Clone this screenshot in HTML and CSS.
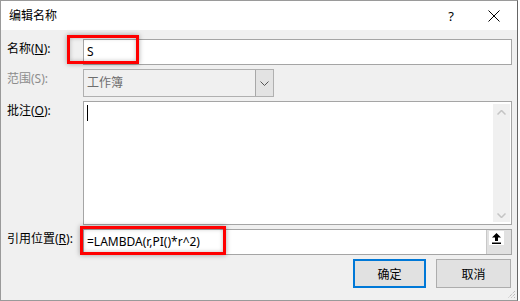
FILE: index.html
```html
<!DOCTYPE html>
<html lang="zh-CN">
<head>
    <meta charset="UTF-8">
    <title>编辑名称</title>
    <link rel="stylesheet" href="styles.css">
</head>
<body>
    <div class="dialog">
        <div class="titlebar">
            <span class="title">编辑名称</span>
            <span class="help">?</span>
            <svg class="close" width="12" height="12" viewBox="0 0 12 12">
                <path d="M0.5 0.5 L11.5 11.5 M11.5 0.5 L0.5 11.5" stroke="#000" stroke-width="1" fill="none"/>
            </svg>
        </div>

        <div class="content">
            <div class="row">
                <label class="lbl">名称(<u>N</u>):</label>
                <div class="field">
                    <span class="val">S</span>
                    <span class="mark mark-name"></span>
                </div>
            </div>

            <div class="row row-scope">
                <label class="lbl lbl-off">范围(S):</label>
                <div class="select">
                    <span class="val">工作簿</span>
                    <span class="drop">
                        <svg width="9" height="5" viewBox="0 0 9 5"><path d="M0.5 0.5 L4.5 4.5 L8.5 0.5" stroke="#555" fill="none"/></svg>
                    </span>
                </div>
            </div>

            <div class="row row-note">
                <label class="lbl">批注(<u>O</u>):</label>
                <div class="memo">
                    <div class="memo-text"><span class="caret"></span></div>
                    <div class="vscroll">
                        <svg width="9" height="5" viewBox="0 0 9 5"><path d="M0.5 4.5 L4.5 0.5 L8.5 4.5" stroke="#c4c4c4" stroke-width="1.5" fill="none"/></svg>
                        <svg width="9" height="5" viewBox="0 0 9 5"><path d="M0.5 0.5 L4.5 4.5 L8.5 0.5" stroke="#c4c4c4" stroke-width="1.5" fill="none"/></svg>
                    </div>
                </div>
            </div>

            <div class="row row-ref">
                <label class="lbl">引用位置(<u>R</u>):</label>
                <div class="field">
                    <span class="val grow">=LAMBDA(r,PI()*r^2)</span>
                    <span class="pick">
                        <span class="pick-face">
                            <svg width="9" height="11" viewBox="0 0 9 11">
                                <path d="M4.5 0 L9 4.5 H6 V8 H3 V4.5 H0 Z" fill="#000"/>
                                <rect x="0" y="9.5" width="9" height="1.5" fill="#000"/>
                            </svg>
                        </span>
                    </span>
                    <span class="mark mark-ref"></span>
                </div>
            </div>

            <div class="actions">
                <button class="btn btn-ok">确定</button>
                <button class="btn btn-cancel">取消</button>
            </div>
        </div>

        <svg class="grip" width="10" height="10" viewBox="0 0 10 10">
            <path d="M9 2 L2 9 M9 5 L5 9 M9 8 L8 9" stroke="#a8a8a8" stroke-width="1" stroke-dasharray="1 1" fill="none"/>
        </svg>
    </div>
</body>
</html>
```

FILE: styles.css
```css
body {
    margin: 0;
    background: #fff;
    font-family: "Noto Sans", "Noto Sans CJK SC", sans-serif;
    font-size: 12px;
    color: #000;
}
.dialog {
    position: relative;
    width: 518px;
    height: 301px;
    box-sizing: border-box;
    border: 1px solid #9a9a9a;
    border-right-color: #666;
    background: #f0f0f0;
    display: flex;
    flex-direction: column;
}
.titlebar {
    height: 29px;
    background: #fff;
    display: flex;
    align-items: center;
    padding-left: 8px;
    line-height: 16px;
}
.title {
    flex: 1;
}
.help {
    width: 8px;
    text-align: center;
    margin-right: 33px;
    font-size: 13px;
}
.close {
    margin-right: 17px;
}
.content {
    padding: 9px 5px 0 6px;
    display: flex;
    flex-direction: column;
}
.row {
    display: flex;
    align-items: flex-start;
}
.row-scope,
.row-note,
.row-ref {
    margin-top: 4px;
}
.lbl {
    width: 76px;
    padding-top: 2px;
    line-height: 16px;
    white-space: nowrap;
}
.lbl-off {
    color: #8d8d8d;
}
.field {
    position: relative;
    flex: 1;
    height: 26px;
    box-sizing: border-box;
    border: 1px solid #a5a5a5;
    background: #fff;
    display: flex;
    align-items: center;
}
.val {
    padding-left: 3px;
    line-height: 16px;
}
.grow {
    flex: 1;
}
.select {
    width: 191px;
    height: 28px;
    box-sizing: border-box;
    border: 1px solid #b0b0b0;
    background: #f0f0f0;
    display: flex;
    align-items: center;
    color: #6d6d6d;
}
.select .val {
    flex: 1;
}
.drop {
    width: 17px;
    align-self: stretch;
    background: #e3e3e3;
    border-left: 1px solid #a8a8a8;
    display: flex;
    align-items: center;
    justify-content: center;
}
.memo {
    flex: 1;
    height: 124px;
    box-sizing: border-box;
    border: 1px solid #a5a5a5;
    background: #fff;
    display: flex;
    padding: 2px 1px 2px 0;
}
.memo-text {
    flex: 1;
    padding: 1px 0 0 3px;
}
.caret {
    display: block;
    width: 1px;
    height: 16px;
    background: #000;
}
.vscroll {
    width: 17px;
    background: #f0f0f0;
    display: flex;
    flex-direction: column;
    justify-content: space-between;
    align-items: center;
    padding: 6px 0 4px;
}
.pick {
    width: 20px;
    align-self: stretch;
    background: #e1e1e1;
    border-left: 1px solid #c8c8c8;
    padding: 1px 2px 0 2px;
}
.pick-face {
    display: flex;
    align-items: center;
    justify-content: center;
    width: 15px;
    height: 14px;
    background: #fff;
}
.mark {
    position: absolute;
    box-sizing: border-box;
    border: 3px solid #f00;
    box-shadow: 0 0 5px rgba(0, 0, 0, 0.35), inset 0 0 4px rgba(0, 0, 0, 0.25);
    pointer-events: none;
}
.mark-name {
    left: -17px;
    top: -5px;
    width: 72px;
    height: 29px;
}
.mark-ref {
    left: -4px;
    top: -4px;
    width: 146px;
    height: 29px;
}
.actions {
    display: flex;
    justify-content: flex-end;
    gap: 10px;
    margin-top: 4px;
    padding-right: 1px;
}
.btn {
    height: 29px;
    box-sizing: border-box;
    background: #e1e1e1;
    border: 1px solid #adadad;
    font: inherit;
    color: #000;
    padding: 0;
}
.btn-ok {
    width: 73px;
    border: 2px solid #0078d7;
}
.btn-cancel {
    width: 75px;
}
.grip {
    position: absolute;
    right: 1px;
    bottom: 1px;
}
```
